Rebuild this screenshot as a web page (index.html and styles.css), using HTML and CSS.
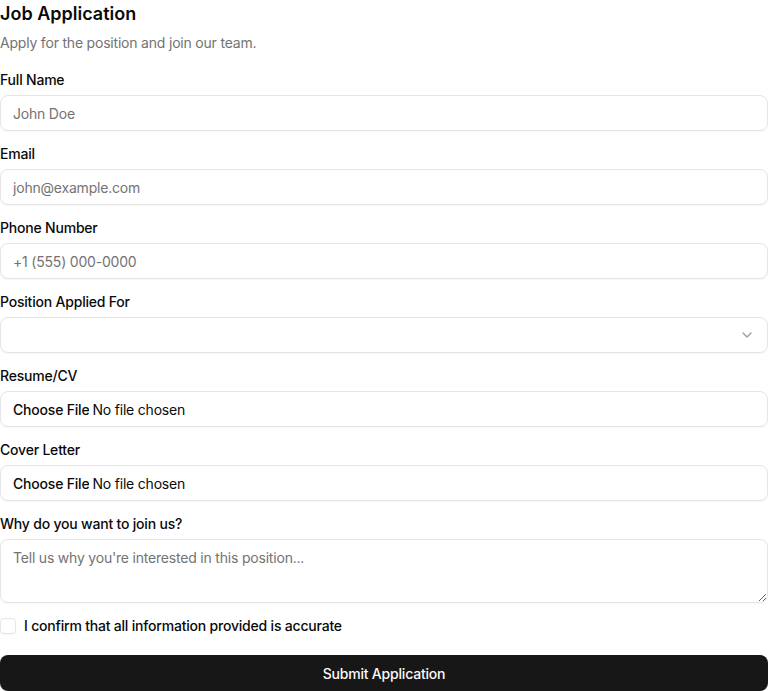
FILE: index.html
```html
<!DOCTYPE html>
<html lang="en">
<head>
<meta charset="utf-8">
<title>Job Application</title>
<link rel="stylesheet" href="styles.css">
</head>
<body>
<form class="form">
  <div class="header">
    <h1 class="title">Job Application</h1>
    <p class="subtitle">Apply for the position and join our team.</p>
  </div>
  <div class="field">
    <label class="label" for="name">Full Name</label>
    <input class="input" id="name" type="text" placeholder="John Doe">
  </div>
  <div class="field">
    <label class="label" for="email">Email</label>
    <input class="input" id="email" type="email" placeholder="john@example.com">
  </div>
  <div class="field">
    <label class="label" for="phone">Phone Number</label>
    <input class="input" id="phone" type="tel" placeholder="+1 (555) 000-0000">
  </div>
  <div class="field">
    <label class="label">Position Applied For</label>
    <button type="button" class="input select">
      <span></span>
      <svg class="chevron" width="16" height="16" viewBox="0 0 24 24" fill="none" stroke="currentColor" stroke-width="2" stroke-linecap="round" stroke-linejoin="round"><path d="m6 9 6 6 6-6"/></svg>
    </button>
  </div>
  <div class="field">
    <label class="label" for="resume">Resume/CV</label>
    <input class="input file" id="resume" type="file">
  </div>
  <div class="field">
    <label class="label" for="cover">Cover Letter</label>
    <input class="input file" id="cover" type="file">
  </div>
  <div class="field">
    <label class="label" for="why">Why do you want to join us?</label>
    <textarea class="input textarea" id="why" placeholder="Tell us why you're interested in this position..."></textarea>
  </div>
  <div class="check-row">
    <span class="checkbox"></span>
    <span class="check-label">I confirm that all information provided is accurate</span>
  </div>
  <button type="submit" class="submit">Submit Application</button>
</form>
</body>
</html>
```
FILE: styles.css
```css
* { box-sizing: border-box; }
html, body {
  margin: 0;
  padding: 0;
  background: #ffffff;
  color: #0a0a0a;
  font-family: Inter, "Liberation Sans", sans-serif;
  letter-spacing: -0.2px;
}
.form {
  width: 768px;
  display: flex;
  flex-direction: column;
}
.header {
  display: flex;
  flex-direction: column;
  gap: 5px;
  margin-bottom: 20px;
}
.title {
  margin: 0;
  font-size: 18px;
  line-height: 28px;
  font-weight: 600;
  letter-spacing: 0;
}
.subtitle {
  margin: 0;
  font-size: 14px;
  line-height: 20px;
  color: #737373;
}
.field {
  display: flex;
  flex-direction: column;
  gap: 8px;
  margin-bottom: 16px;
}
.label {
  font-size: 14px;
  line-height: 14px;
  font-weight: 500;
}
.input {
  width: 100%;
  height: 36px;
  border: 1px solid #e5e5e5;
  border-radius: 8px;
  padding: 0 12px;
  font-family: inherit;
  font-size: 14px;
  letter-spacing: -0.2px;
  color: #0a0a0a;
  background: #ffffff;
  box-shadow: 0 1px 2px rgba(0,0,0,0.04);
  outline: none;
}
.input::placeholder { color: #737373; }
.select {
  display: flex;
  align-items: center;
  justify-content: space-between;
  cursor: pointer;
}
.chevron { color: #0a0a0a; opacity: 0.4; }
.file {
  padding-top: 9px;
  line-height: 18px;
}
.file::file-selector-button {
  border: 0;
  background: transparent;
  padding: 0;
  margin-right: 3px;
  font-family: inherit;
  font-size: 14px;
  letter-spacing: -0.2px;
  font-weight: 500;
  color: #0a0a0a;
}
.textarea {
  height: 64px;
  padding: 8px 12px;
  line-height: 20px;
  resize: vertical;
}
.check-row {
  display: flex;
  align-items: center;
  gap: 8px;
  height: 16px;
  margin-top: -1px;
  margin-bottom: 21px;
}
.checkbox {
  width: 16px;
  height: 16px;
  border: 1px solid #e5e5e5;
  border-radius: 4px;
  box-shadow: 0 1px 2px rgba(0,0,0,0.04);
}
.check-label {
  font-size: 14px;
  line-height: 14px;
  font-weight: 500;
}
.submit {
  height: 36px;
  width: 100%;
  border: 0;
  border-radius: 8px;
  background: #171717;
  color: #fafafa;
  font-family: inherit;
  font-size: 14px;
  letter-spacing: -0.2px;
  font-weight: 500;
  cursor: pointer;
}
```
